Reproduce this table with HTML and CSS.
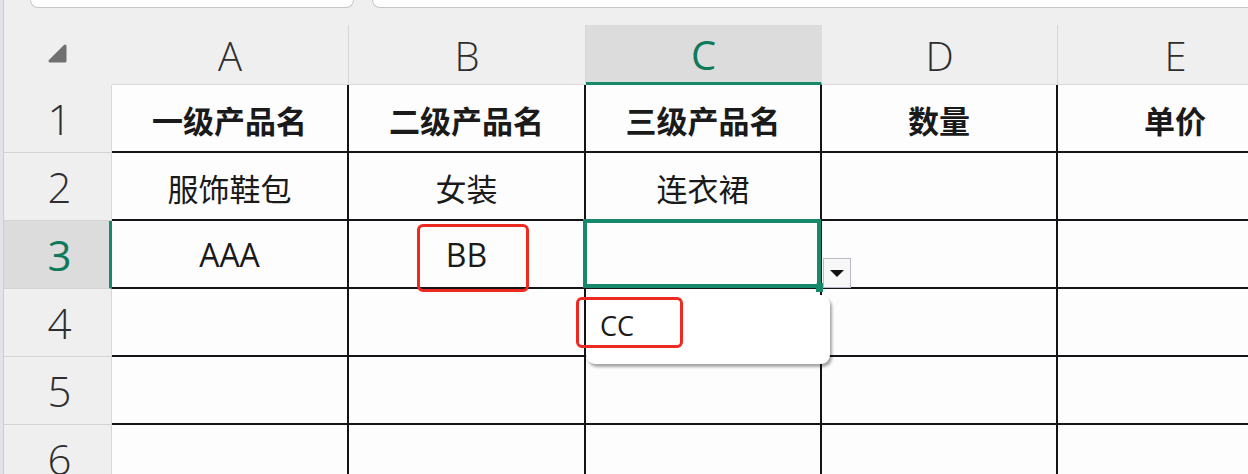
FILE: index.html
```html
<!DOCTYPE html>
<html lang="zh-CN">
<head>
<meta charset="utf-8">
<title>Sheet</title>
<link rel="stylesheet" href="styles.css">
</head>
<body>
<div class="screen">
  <div class="edge"></div>
  <div class="content">
    <div class="topbar">
      <div class="field field-name"></div>
      <div class="field field-formula"></div>
    </div>
    <div class="sheet">
      <div class="corner">
        <svg class="corner-icon" width="20" height="19" viewBox="0 0 20 19"><polygon points="17,2 17,17 2,17" fill="#707070" stroke="#707070" stroke-width="3" stroke-linejoin="round"/></svg>
      </div>
      <div class="colhead">A</div>
      <div class="colhead">B</div>
      <div class="colhead active">C</div>
      <div class="colhead">D</div>
      <div class="colhead">E</div>

      <div class="rowhead">1</div>
      <div class="cell bold">一级产品名</div>
      <div class="cell bold">二级产品名</div>
      <div class="cell bold">三级产品名</div>
      <div class="cell bold">数量</div>
      <div class="cell bold">单价</div>

      <div class="rowhead">2</div>
      <div class="cell">服饰鞋包</div>
      <div class="cell">女装</div>
      <div class="cell">连衣裙</div>
      <div class="cell"></div>
      <div class="cell"></div>

      <div class="rowhead active">3</div>
      <div class="cell latin">AAA</div>
      <div class="cell latin marked">BB<span class="mark mark-bb"></span></div>
      <div class="cell selected">
        <span class="sel-frame"></span>
        <span class="fill-handle"></span>
        <span class="dd-button"><svg width="14" height="7" viewBox="0 0 14 7"><polygon points="0,0 14,0 7,7" fill="#111"/></svg></span>
        <div class="dd-list">
          <div class="dd-item">CC</div>
          <span class="mark mark-cc"></span>
        </div>
      </div>
      <div class="cell"></div>
      <div class="cell"></div>

      <div class="rowhead">4</div>
      <div class="cell"></div><div class="cell"></div><div class="cell"></div><div class="cell"></div><div class="cell"></div>

      <div class="rowhead">5</div>
      <div class="cell"></div><div class="cell"></div><div class="cell"></div><div class="cell"></div><div class="cell"></div>

      <div class="rowhead">6</div>
      <div class="cell"></div><div class="cell"></div><div class="cell"></div><div class="cell"></div><div class="cell"></div>
    </div>
  </div>
</div>
</body>
</html>
```

FILE: styles.css
```css
* { box-sizing: border-box; }
html, body { margin: 0; padding: 0; }
body {
  width: 1248px;
  height: 474px;
  overflow: hidden;
  background: #efefef;
  font-family: "Open Sans", "Noto Sans CJK SC", sans-serif;
}
.screen {
  display: flex;
  width: 1248px;
  height: 474px;
  overflow: hidden;
}
.edge {
  flex: 0 0 4px;
  background: #e1e3e6;
  border-right: 1px solid #cdcdcd;
}
.content {
  flex: 1 1 auto;
  display: flex;
  flex-direction: column;
  min-width: 0;
}
.topbar {
  flex: 0 0 24px;
  display: flex;
  gap: 18px;
  padding-left: 26px;
}
.field {
  height: 8px;
  background: #ffffff;
  border: 1px solid #c6c6c6;
  border-top: none;
  border-radius: 0 0 9px 9px;
}
.field-name { flex: 0 0 324px; }
.field-formula { flex: 1 0 auto; margin-right: -40px; }

.sheet {
  display: grid;
  grid-template-columns: 108px 237px 237px 236px 236px 236px;
  grid-template-rows: 61px repeat(6, 68px);
  background: #efefef;
}
.corner {
  display: flex;
  align-items: center;
  justify-content: center;
  padding: 0 4px 0 0;
}
.corner-icon { margin-top: -2px; margin-left: 4px; }
.colhead {
  display: flex;
  align-items: center;
  justify-content: center;
  font-size: 40px;
  font-weight: 300;
  color: #2e2e2e;
  border-right: 1px solid #d6d6d6;
  border-bottom: 1px solid #dadada;
  margin-top: 1px;
  padding-top: 1px;
}
.colhead.active {
  background: #dcdcdc;
  color: #0f7a5b;
  font-weight: 400;
  border-bottom: 3px solid #17896a;
  border-right-color: #dcdcdc;
}
.rowhead {
  display: flex;
  align-items: center;
  justify-content: center;
  font-size: 42px;
  font-weight: 300;
  color: #2e2e2e;
  border-bottom: 1px solid #d4d4d4;
  border-right: 1px solid #d8d8d8;
  padding-left: 4px;
}
.rowhead.active {
  background: #dcdcdc;
  color: #0f7a5b;
  font-weight: 400;
  border-right: 3px solid #17896a;
  padding-left: 6px;
}
.cell {
  position: relative;
  display: flex;
  align-items: center;
  justify-content: center;
  background: #fdfdfd;
  border-right: 2px solid #141418;
  border-bottom: 2px solid #141418;
  font-family: "Noto Sans CJK SC", sans-serif;
  font-size: 31px;
  color: #1a1a1a;
  padding-top: 2px;
}
.cell.bold { font-weight: 700; }
.cell.latin {
  font-family: "Open Sans", "Noto Sans CJK SC", sans-serif;
  font-size: 32px;
  padding-top: 0;
}
.cell.marked { z-index: 2; }
.mark {
  position: absolute;
  border: 3.5px solid #ec2a22;
  border-radius: 6px;
  pointer-events: none;
}
.mark-bb {
  left: 68px;
  top: 3px;
  width: 112px;
  height: 68px;
}
.cell.selected { overflow: visible; z-index: 3; }
.sel-frame {
  position: absolute;
  left: -3px;
  top: -2px;
  right: -1px;
  bottom: -1px;
  border: 4px solid #17896a;
}
.fill-handle {
  position: absolute;
  right: -3px;
  bottom: -5px;
  width: 7px;
  height: 9px;
  background: #17896a;
  border-top-left-radius: 2px;
}
.dd-button {
  position: absolute;
  left: 237px;
  top: 37px;
  width: 28px;
  height: 30px;
  background: #f7f7f7;
  border: 1px solid #b9bcc4;
  display: flex;
  align-items: center;
  justify-content: center;
  padding-top: 1px;
}
.dd-list {
  position: absolute;
  left: 0;
  top: 74px;
  width: 244px;
  height: 69px;
  background: #ffffff;
  border-radius: 9px;
  box-shadow: 2px 3px 3px rgba(0, 0, 0, 0.35);
  z-index: 3;
}
.dd-item {
  font-family: "Open Sans", sans-serif;
  font-size: 27px;
  color: #1a1a1a;
  padding: 13px 0 0 14px;
  line-height: 36px;
}
.mark-cc {
  left: -10px;
  top: 2px;
  width: 107px;
  height: 51px;
}
```
